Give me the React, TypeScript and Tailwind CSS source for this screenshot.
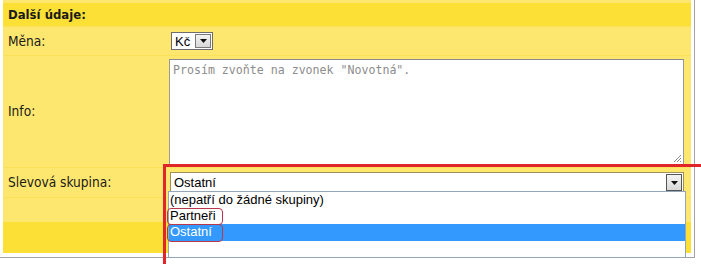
import React from "react";

const labelFont = "font-['DejaVu_Sans_Condensed','DejaVu_Sans',sans-serif]";
const arial = "font-['Liberation_Sans',Arial,sans-serif]";

function DropButton({ className }: { className: string }) {
  return (
    <span className={`flex items-center justify-center border border-[#7a7a7a] bg-gradient-to-b from-[#f4f4f4] to-[#d8d8d8] ${className}`}>
      <svg width="7" height="4" viewBox="0 0 7 4">
        <path d="M0 0h7L3.5 4z" fill="#111" />
      </svg>
    </span>
  );
}

function Row({ label, children, className = "" }: { label?: React.ReactNode; children?: React.ReactNode; className?: string }) {
  return (
    <div className={`flex border-t border-[#fbe05a] bg-[#fee76f] ${className}`}>
      <div className="flex w-[166px] shrink-0 items-center pl-[5px] text-[13.6px] text-[#1a1a1a]">{label}</div>
      <div className="flex flex-1 items-center">{children}</div>
    </div>
  );
}

export default function App() {
  return (
    <div className={`relative h-[264px] w-[701px] overflow-hidden bg-white ${labelFont}`}>
      <div className="w-[695px] border-r border-b border-[#a3a3a3] pl-[3px] pr-[3px] pb-[4px]">
        <div className="h-[3px] bg-[#fee76f]" />
        <div className="flex h-[23px] items-center bg-[#fde035] pl-[5px] text-[13px] font-bold text-[#1a1a1a]">
          Další údaje:
        </div>
        <Row label="Měna:" className="h-[29px]">
          <div className="ml-[2px] flex h-[18px] w-[42px] items-center border border-[#6e6e6e] bg-white">
            <span className={`${arial} pl-[3px] text-[13px] leading-none text-black`}>Kč</span>
            <DropButton className="ml-auto mr-[1px] h-[14px] w-[16px]" />
          </div>
        </Row>
        <Row label="Info:" className="h-[112px]">
          <div className="relative h-[106px] w-[515px] border border-[#9a9a9a] border-t-[#8a8a8a] bg-white">
            <div className="pl-[3px] pt-[2px] font-['DejaVu_Sans_Mono',monospace] text-[11.6px] text-[#8c8c8c]">
              Prosím zvoňte na zvonek "Novotná".
            </div>
            <svg className="absolute right-[1px] bottom-[1px]" width="9" height="9" viewBox="0 0 9 9">
              <path d="M8 1L1 8M8 4L4 8M8 7L7 8" stroke="#8a8a8a" strokeWidth="1" />
            </svg>
          </div>
        </Row>
        <Row label="Slevová skupina:" className="h-[30px]">
          <div className="ml-[1px] flex h-[21px] w-[514px] items-center border border-[#a08f5a] bg-white">
            <span className={`${arial} pl-[3px] text-[13px] text-black`}>Ostatní</span>
            <DropButton className="ml-auto mr-[1px] h-[17px] w-[16px] border-[#555]" />
          </div>
        </Row>
        <Row className="h-[25px]" />
        <div className="h-[31px] bg-[#fde035]" />
      </div>

      {/* open dropdown list */}
      <div className={`absolute left-[168px] top-[191px] h-[67px] w-[518px] border border-[#95a6b8] bg-white ${arial} text-[13px] leading-[16px] text-black`}>
        <div className="h-[16px] pl-[1px]">(nepatří do žádné skupiny)</div>
        <div className="h-[16px] pl-[1px]">Partneři</div>
        <div className="h-[17px] bg-[#3399ff] pl-[1px] text-white">Ostatní</div>
      </div>

      {/* annotations */}
      <div className="absolute left-[163px] top-[164px] h-[3px] w-[538px] bg-[#e0262a]" />
      <div className="absolute left-[163px] top-[164px] h-[100px] w-[3px] bg-[#e0262a]" />
      <div className="absolute left-[167px] top-[208px] h-[17px] w-[56px] rounded-[4px] border border-[#b8374a]" />
      <div className="absolute left-[167px] top-[224px] h-[18px] w-[56px] rounded-[4px] border border-[#b8374a]" />
    </div>
  );
}
